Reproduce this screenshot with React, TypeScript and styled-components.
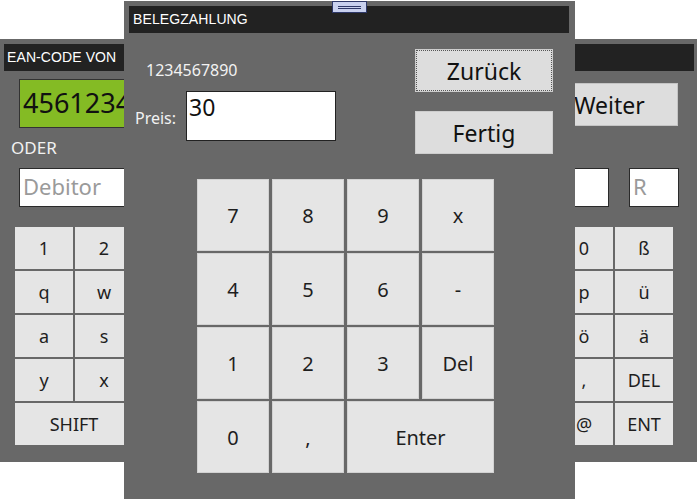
import React from "react";
import styled, { createGlobalStyle } from "styled-components";

const GlobalStyle = createGlobalStyle`
  html, body {
    margin: 0;
    padding: 0;
    background: #ffffff;
    overflow: hidden;
  }
  body {
    font-family: "Noto Sans", "Open Sans", sans-serif;
  }
`;

// keys in the middle of the back keyboard sit under the dialog, so they stay blank
const backRows: { label: string; span?: number }[][] = [
  [{ label: "1" }, { label: "2" }, { label: "" }, { label: "" }, { label: "" }, { label: "" }, { label: "" }, { label: "" }, { label: "" }, { label: "0" }, { label: "ß" }],
  [{ label: "q" }, { label: "w" }, { label: "" }, { label: "" }, { label: "" }, { label: "" }, { label: "" }, { label: "" }, { label: "" }, { label: "p" }, { label: "ü" }],
  [{ label: "a" }, { label: "s" }, { label: "" }, { label: "" }, { label: "" }, { label: "" }, { label: "" }, { label: "" }, { label: "" }, { label: "ö" }, { label: "ä" }],
  [{ label: "y" }, { label: "x" }, { label: "" }, { label: "" }, { label: "" }, { label: "" }, { label: "" }, { label: "" }, { label: "" }, { label: "," }, { label: "DEL" }],
  [{ label: "SHIFT", span: 2 }, { label: "", span: 7 }, { label: "@" }, { label: "ENT" }],
];

const padKeys: { label: string; span?: number }[] = [
  { label: "7" }, { label: "8" }, { label: "9" }, { label: "x" },
  { label: "4" }, { label: "5" }, { label: "6" }, { label: "-" },
  { label: "1" }, { label: "2" }, { label: "3" }, { label: "Del" },
  { label: "0" }, { label: "," }, { label: "Enter", span: 2 },
];

const App = () => {
  return (
    <Desktop>
      <GlobalStyle />
      <BackWindow>
        <TitleBar>EAN-CODE VON</TitleBar>
        <BackTop>
          <ScanField>4561234</ScanField>
          <WeiterButton>Weiter</WeiterButton>
        </BackTop>
        <OderLabel>ODER</OderLabel>
        <FieldRow>
          <TextField $width={200} $placeholder>Debitor</TextField>
          <RightFields>
            <TextField $width={110} />
            <TextField $width={50} $placeholder>R</TextField>
          </RightFields>
        </FieldRow>
        <Keyboard>
          {backRows.flat().map((k, i) => (
            <BoardKey key={i} $span={k.span}>
              {k.label}
            </BoardKey>
          ))}
        </Keyboard>
      </BackWindow>

      <Dialog>
        <Grip />
        <DialogTitle>BELEGZAHLUNG</DialogTitle>
        <DialogTop>
          <InfoColumn>
            <Receipt>1234567890</Receipt>
            <PriceRow>
              <PriceLabel>Preis:</PriceLabel>
              <PriceInput>30</PriceInput>
            </PriceRow>
          </InfoColumn>
          <Actions>
            <ActionButton $focused>Zurück</ActionButton>
            <ActionButton>Fertig</ActionButton>
          </Actions>
        </DialogTop>
        <Keypad>
          {padKeys.map((k, i) => (
            <PadKey key={i} $span={k.span}>
              {k.label}
            </PadKey>
          ))}
        </Keypad>
      </Dialog>
    </Desktop>
  );
};

export default App;

const Desktop = styled.div`
  position: relative;
  width: 697px;
  height: 499px;
  background: #ffffff;
  overflow: hidden;
`;

/* windows on the desktop */
const BackWindow = styled.div`
  position: absolute;
  left: 0;
  top: 39px;
  width: 697px;
  height: 423px;
  box-sizing: border-box;
  padding: 5px 3px 0 4px;
  background: #686868;
  display: flex;
  flex-direction: column;
`;

const TitleBar = styled.div`
  height: 27px;
  background: #222222;
  color: #ffffff;
  font-family: "Liberation Sans", Arial, sans-serif;
  font-size: 14px;
  line-height: 27px;
  padding-left: 3px;
  letter-spacing: 0.1px;
`;

const BackTop = styled.div`
  display: flex;
  align-items: center;
  justify-content: space-between;
  margin-top: 8px;
  padding: 0 16px 0 15px;
`;

const ScanField = styled.div`
  width: 330px;
  height: 49px;
  box-sizing: border-box;
  background: #84bb24;
  border: 1px solid #333333;
  color: #111111;
  font-size: 27px;
  line-height: 45px;
  padding-left: 3px;
  overflow: hidden;
  white-space: nowrap;
`;

const WeiterButton = styled.div`
  width: 137px;
  height: 43px;
  margin-top: 2px;
  box-sizing: border-box;
  background: #dddddd;
  border: 1px solid #c4c4c4;
  color: #111111;
  font-size: 23px;
  display: flex;
  align-items: center;
  justify-content: center;
`;

const OderLabel = styled.div`
  margin: 10px 0 0 7px;
  color: #f2f2f2;
  font-size: 17px;
  line-height: 20px;
`;

const FieldRow = styled.div`
  display: flex;
  justify-content: space-between;
  margin-top: 10px;
  padding: 0 15px 0 15px;
`;

const RightFields = styled.div`
  display: flex;
  gap: 20px;
`;

const TextField = styled.div<{ $width: number; $placeholder?: boolean }>`
  width: ${(p) => p.$width}px;
  height: 39px;
  box-sizing: border-box;
  background: #ffffff;
  border: 1px solid #2a2a2a;
  color: ${(p) => (p.$placeholder ? "#9a9a9a" : "#111111")};
  font-size: 22px;
  line-height: 35px;
  padding-left: 3px;
  white-space: nowrap;
`;

const Keyboard = styled.div`
  display: grid;
  grid-template-columns: repeat(11, 58px);
  grid-auto-rows: 42px;
  gap: 2px;
  margin: 20px 0 0 11px;
`;

const BoardKey = styled.div<{ $span?: number }>`
  grid-column: span ${(p) => p.$span ?? 1};
  background: #e5e5e5;
  color: #1e1e1e;
  font-size: 18px;
  display: flex;
  align-items: center;
  justify-content: center;
`;

const Dialog = styled.div`
  position: absolute;
  left: 124px;
  top: 1px;
  width: 451px;
  height: 500px;
  box-sizing: border-box;
  padding: 5px 6px 0 5px;
  background: #686868;
  display: flex;
  flex-direction: column;
`;

/* little drag handle that sits over the dialog's top edge */
const Grip = styled.div`
  position: absolute;
  left: 208px;
  top: 0;
  width: 35px;
  height: 12px;
  box-sizing: border-box;
  background: #c9d1ef;
  border: 1px solid #2e3868;

  &::before,
  &::after {
    content: "";
    position: absolute;
    left: 5px;
    right: 5px;
    height: 1px;
    background: #2e3868;
  }
  &::before {
    top: 4px;
  }
  &::after {
    top: 6px;
  }
`;

const DialogTitle = styled(TitleBar)`
  padding-left: 4px;
`;

const DialogTop = styled.div`
  display: flex;
`;

const InfoColumn = styled.div`
  width: 286px;
  padding: 27px 0 0 6px;
  box-sizing: border-box;
`;

const Receipt = styled.div`
  margin-left: 11px;
  color: #f2f2f2;
  font-size: 16px;
  line-height: 20px;
`;

const PriceRow = styled.div`
  display: flex;
  align-items: center;
  gap: 10px;
  margin-top: 11px;
`;

const PriceLabel = styled.div`
  color: #f2f2f2;
  font-size: 16px;
  line-height: 20px;
  margin-top: 3px;
`;

const PriceInput = styled.div`
  width: 150px;
  height: 50px;
  box-sizing: border-box;
  background: #ffffff;
  border: 1px solid #222222;
  color: #111111;
  font-size: 23px;
  line-height: 30px;
  padding-left: 2px;
`;

const Actions = styled.div`
  display: flex;
  flex-direction: column;
  gap: 19px;
  margin-top: 16px;
`;

const ActionButton = styled.div<{ $focused?: boolean }>`
  width: 138px;
  height: 43px;
  box-sizing: border-box;
  background: #dddddd;
  border: 1px solid #cdcdcd;
  outline: ${(p) => (p.$focused ? "1px dotted #555555" : "none")};
  outline-offset: -2px;
  color: #111111;
  font-size: 23px;
  display: flex;
  align-items: center;
  justify-content: center;
`;

const Keypad = styled.div`
  display: grid;
  grid-template-columns: repeat(4, 72px);
  grid-auto-rows: 72px;
  column-gap: 3px;
  row-gap: 2px;
  margin: 25px 0 0 68px;
`;

const PadKey = styled.div<{ $span?: number }>`
  grid-column: span ${(p) => p.$span ?? 1};
  box-sizing: border-box;
  background: #e5e5e5;
  border: 1px solid #d2d2d2;
  color: #1e1e1e;
  font-size: 20px;
  display: flex;
  align-items: center;
  justify-content: center;
`;
